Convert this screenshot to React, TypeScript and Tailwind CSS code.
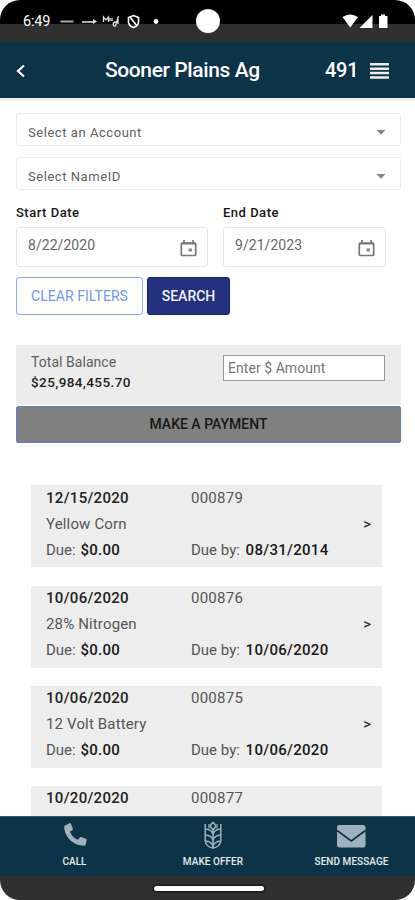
import type { ReactNode } from "react";

const invoices = [
  { date: "12/15/2020", id: "000879", item: "Yellow Corn", due: "$0.00", by: "08/31/2014" },
  { date: "10/06/2020", id: "000876", item: "28% Nitrogen", due: "$0.00", by: "10/06/2020" },
  { date: "10/06/2020", id: "000875", item: "12 Volt Battery", due: "$0.00", by: "10/06/2020" },
  { date: "10/20/2020", id: "000877", item: "", due: "", by: "" },
];

function StatusBar() {
  return (
    <div className="relative flex h-[42px] shrink-0 items-start bg-[linear-gradient(#000_24px,#303030_24px)] pl-[23px] text-white">
      <span className="mt-[13px] w-[37px] text-[14.5px] leading-[18px] tracking-[-0.2px]">6:49</span>
      <svg width="100" height="20" viewBox="60 12 100 20" className="mt-3" fill="none" stroke="#fff">
        <path d="M60.500 21.500h13" stroke="#aaa" strokeWidth="2" />
        <path d="M82 22h12" stroke="#aaa" strokeWidth="2" />
        <path d="M93 19l4 2.500-4 2.500z" fill="#ddd" stroke="none" />
        <path d="M103.500 22v-5l2.500 3 2.500-3v5M110 21v-3M112 18v3M118.500 16l-3 10c-3 1-3-4 0-4h3M118 19v5" strokeWidth="1.300" stroke="#ddd" />
        <path d="M133.500 15.500l5 2v4.500c0 2.500-2 4.500-5 5.500-3-1-5-3-5-5.500v-4.500zM130 17l7 9" strokeWidth="1.600" />
        <circle cx="156" cy="21.500" r="2.400" fill="#fff" stroke="none" />
      </svg>
      <div className="absolute left-[196px] top-[9px] size-[24px] rounded-full bg-white" />
      <svg width="46" height="14" viewBox="342 14 46 14" className="absolute left-[342px] top-[14px]" fill="#fff">
        <path d="M342.500 17Q350 12 358 17L350.200 27.500z" />
        <path d="M359.500 28L372.500 15V28z" />
        <path d="M379 16h2v-1.500h4V16h2.500v12H379z" />
      </svg>
    </div>
  );
}

function Header() {
  return (
    <header className="flex h-[56px] shrink-0 items-center bg-[#0d3446] pl-4 text-white">
      <svg width="10" height="14" viewBox="0 0 10 14" fill="none" stroke="#fff" strokeWidth="2.200" className="mt-[2px]">
        <path d="M8 1.500L2 7l6 5.500" />
      </svg>
      <h1 className="ml-[79px] w-[220px] whitespace-nowrap text-[21px] font-medium leading-6 tracking-[-0.4px]">Sooner Plains Ag</h1>
      <span className="w-[45px] text-[20px] font-medium leading-6 tracking-[-0.3px]">491</span>
      <svg width="20" height="16" viewBox="0 0 20 16" className="mt-[2px]" fill="#eee">
        <path d="M0 0h19v2.500H0zM0 4.400h19v2.500H0zM0 8.800h19v2.500H0zM0 13.200h19v2.500H0z" />
      </svg>
    </header>
  );
}

function SelectBox({ children }: { children: ReactNode }) {
  return (
    <div className="flex h-[33px] items-center justify-between rounded-[3px] border border-[#ebebeb] pl-[11px] pr-[14px] pt-[6px] text-[13px] tracking-[0.55px] text-[#606060]">
      {children}
      <svg width="10" height="5" viewBox="0 0 10 5"><path d="M.5 0h9L5 4.800z" fill="#858585" /></svg>
    </div>
  );
}

function DateBox({ label, value, className }: { label: string; value: string; className: string }) {
  return (
    <div className={className}>
      <div className="text-[13px] font-medium leading-[18px] tracking-[0.5px] text-[#151515]">{label}</div>
      <div className="mt-[5px] flex h-10 justify-between rounded-[3px] border border-[#e8e8e8] pl-[11px] pr-[9px] text-[14px] text-[#666]">
        <span className="mt-[7px] leading-5 tracking-[0.05px]">{value}</span>
        <svg width="18" height="18" viewBox="0 0 18 18" className="mt-[12px]" fill="none" stroke="#777" strokeWidth="1.700">
          <rect x="1.300" y="3" width="14.400" height="12.500" rx="1" />
          <path d="M1.500 3.700h14M4 0v3M13 0v3" />
          <rect x="8.500" y="8.500" width="3.500" height="3" fill="#888" stroke="none" />
        </svg>
      </div>
    </div>
  );
}

function Wheat() {
  return (
    <svg width="18" height="28" viewBox="0 0 18 28" fill="none" stroke="#9eb1bc" strokeWidth="1.500">
      <path d="M9 7v20M9 0L6 4l3 4 3-4zM1.200 2v17q1 6 7.800 7 6.800-1 7.800-7V2" />
      <path d="M1.500 7q6 .5 7.500 5 1.500-4.500 7.500-5M1.500 13q6 .5 7.500 5 1.500-4.500 7.500-5M1.500 19q6 .5 7.500 5 1.500-4.500 7.500-5" />
      <path d="M5 2v4.500M13 2v4.500" strokeWidth="1.200" />
    </svg>
  );
}

export default function App() {
  return (
    <div className="h-[900px] w-[415px] overflow-hidden bg-white font-[Roboto,sans-serif]">
      <div className="flex h-full flex-col overflow-hidden rounded-[20px] bg-white">
        <StatusBar />
        <Header />
        <main className="min-h-0 flex-1 overflow-hidden border-t-[3px] border-[#f0f0ee] pl-4 pt-[12px]">
          <div className="flex w-[385px] flex-col gap-[11px]">
            <SelectBox>Select an Account</SelectBox>
            <SelectBox>Select NameID</SelectBox>
          </div>
          <div className="mt-[14px] flex gap-[15px]">
            <DateBox label="Start Date" value="8/22/2020" className="w-[192px]" />
            <DateBox label="End Date" value="9/21/2023" className="w-[163px]" />
          </div>
          <div className="mt-[10px] flex gap-[4px] text-[14px]">
            <button className="h-[38px] w-[127px] whitespace-nowrap rounded-[3px] border border-[#8daeef] tracking-[0.05px] text-[#6c98ee]">CLEAR FILTERS</button>
            <button className="h-[38px] w-[83px] rounded-[3px] border border-[#172474] bg-[#25317f] font-medium tracking-[0px] text-[#f0f2ff]">SEARCH</button>
          </div>
          <section className="mt-[30px] w-[385px]">
            <div className="flex h-[60px] justify-between bg-[#ececec] pl-[15px] pr-[16px] pt-[8px]">
              <div className="whitespace-nowrap text-[14px] leading-5 text-[#606060]">
                <div className="mt-[-1px] tracking-[0.05px]">Total Balance</div>
                <div className="text-[13.5px] font-medium tracking-[0.4px] text-[#222]">$25,984,455.70</div>
              </div>
              <div className="mt-[2px] h-[26px] w-[162px] border border-[#999] bg-white pl-1 text-[14px] leading-[24px] tracking-[0.05px] text-[#777]">Enter $ Amount</div>
            </div>
            <button className="mt-px block h-[37px] w-full rounded-[2px] border border-[#6080c5] bg-[#808080] text-[14px] font-medium tracking-[0px] text-[#171717]">MAKE A PAYMENT</button>
          </section>
          <div className="ml-[15px] mt-[42px] w-[351px]">
            {invoices.map((v, i) => (
              <article key={v.id} className="mb-[18px] flex h-[82px] items-center bg-[#ededed] pl-[15px] pr-[10px] text-[15px] leading-[26px] text-[#555] first:mb-[19px]">
                <div className={i ? "-mt-0.5 h-full w-[145px] whitespace-nowrap" : "h-full w-[145px] whitespace-nowrap"}>
                  <div className="font-medium tracking-[0.3px] text-[#222]">{v.date}</div>
                  <div className="h-[26px] tracking-[0.15px]">{v.item}</div>
                  {v.due && <div>Due: <b className="ml-px font-medium tracking-[0.25px] text-[#181818]">{v.due}</b></div>}
                </div>
                <div className={i ? "-mt-0.5 h-full flex-1 whitespace-nowrap" : "h-full flex-1 whitespace-nowrap"}>
                  <div className="tracking-[0.25px]">{v.id}</div>
                  {v.by && <div className="mt-[26px]">Due by: <b className="ml-[2px] font-medium tracking-[0.3px] text-[#181818]">{v.by}</b></div>}
                </div>
                {v.by && <span className={i ? "mb-[6px] mr-px text-[15px] font-medium text-[#333]" : "mb-[4px] mr-px text-[15px] font-medium text-[#333]"}>&gt;</span>}
              </article>
            ))}
          </div>
        </main>
        <nav className="flex h-[60px] shrink-0 border-t border-[#3a5664] bg-[#0d3446] text-[10px] font-medium text-[#e3ebef]">
          <div className="flex w-[149px] flex-col items-center">
            <svg width="23" height="23" viewBox="0 0 23 23" className="ml-px mt-[6px]" fill="#9eb1bc">
              <path d="M1 2.500L5.500.2q1-.3 1.400.5l2 5q.2.800-.4 1.400L6 8.800q2.500 6 8 8l2-2.500q.5-.6 1.200-.3l5 2.100q.7.400.5 1.200l-1.100 4.500q-.3.900-1.200.9C9 22.700.2 13.700.2 3.500q0-.7.800-1z" />
            </svg>
            <span className="mt-[10px] leading-3">CALL</span>
          </div>
          <div className="flex w-[128px] flex-col items-center">
            <div className="mt-[5px] h-[28px]"><Wheat /></div>
            <span className="mt-[6px] whitespace-nowrap leading-3 tracking-[0.05px]">MAKE OFFER</span>
          </div>
          <div className="flex flex-1 flex-col items-center pl-[11px]">
            <svg width="29" height="24" viewBox="0 0 29 24" className="mt-[8px]" fill="#9eb1bc">
              <rect width="28.500" height="22.500" rx="2.500" />
              <path d="M0 5.500L14.300 16 28.500 5.500" fill="none" stroke="#0d3446" strokeWidth="1.800" />
            </svg>
            <span className="mt-[7px] whitespace-nowrap leading-3 tracking-[0.05px]">SEND MESSAGE</span>
          </div>
        </nav>
        <footer className="flex h-[24px] shrink-0 items-center justify-center bg-[#303030]">
          <div className="ml-[2px] h-[5px] w-[110px] rounded-full bg-white shadow-[0_0_2px_1px_#111]" />
        </footer>
      </div>
    </div>
  );
}
